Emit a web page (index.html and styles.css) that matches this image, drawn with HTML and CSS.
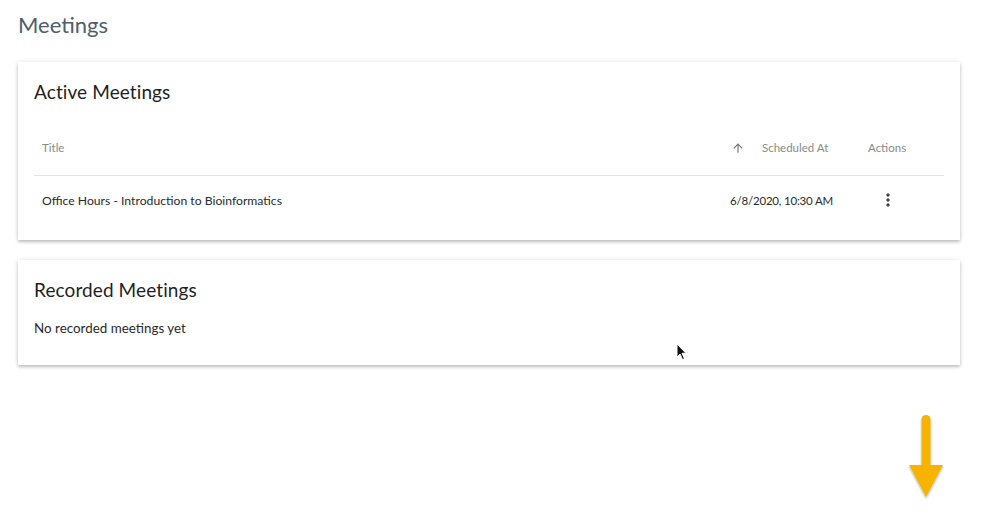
FILE: index.html
```html
<!DOCTYPE html>
<html lang="en">
<head>
<meta charset="utf-8">
<title>Meetings</title>
<link rel="stylesheet" href="styles.css">
</head>
<body>
<main class="page">
  <h1 class="page-title">Meetings</h1>

  <section class="card card-active">
    <h2 class="card-title">Active Meetings</h2>
    <div class="table">
      <div class="row head">
        <div class="cell">Title</div>
        <div class="cell sched">
          <svg class="sort" viewBox="0 0 24 24" width="14" height="14"><path d="M4 12l1.41 1.41L11 7.83V20h2V7.83l5.58 5.59L20 12l-8-8-8 8z" fill="#777"/></svg>
          <span>Scheduled At</span>
        </div>
        <div class="cell">Actions</div>
      </div>
      <div class="row body">
        <div class="cell">Office Hours - Introduction to Bioinformatics</div>
        <div class="cell date">6/8/2020, 10:30 AM</div>
        <div class="cell">
          <button class="kebab" aria-label="More actions">
            <svg viewBox="0 0 24 24" width="20" height="20"><path d="M12 8c1.1 0 2-.9 2-2s-.9-2-2-2-2 .9-2 2 .9 2 2 2zm0 2c-1.1 0-2 .9-2 2s.9 2 2 2 2-.9 2-2-.9-2-2-2zm0 6c-1.1 0-2 .9-2 2s.9 2 2 2 2-.9 2-2-.9-2-2-2z" fill="#444"/></svg>
          </button>
        </div>
      </div>
    </div>
  </section>

  <section class="card card-recorded">
    <h2 class="card-title">Recorded Meetings</h2>
    <p class="empty">No recorded meetings yet</p>
  </section>
</main>

<svg class="cursor" viewBox="0 0 12 18" width="12" height="18">
  <path d="M1 1 L1 14 L4 11 L6.5 16.5 L8.5 15.6 L6 10.3 L10 10.3 Z" fill="#111" stroke="#fff" stroke-width="1"/>
</svg>

<svg class="big-arrow" viewBox="0 0 40 90" width="40" height="90">
  <defs>
    <filter id="sh" x="-20%" y="-10%" width="140%" height="130%">
      <feDropShadow dx="0" dy="1.5" stdDeviation="1" flood-color="#000" flood-opacity="0.35"/>
    </filter>
  </defs>
  <g filter="url(#sh)">
    <rect x="15.5" y="2" width="9" height="60" rx="4.5" fill="#f6b400"/>
    <path d="M3 52 L37 52 L20 84 Z" fill="#f6b400"/>
  </g>
</svg>
</body>
</html>
```

FILE: styles.css
```css
* { box-sizing: border-box; }

html, body {
  margin: 0;
  padding: 0;
  background: #ffffff;
}

body {
  font-family: Lato, "Noto Sans", "Liberation Sans", sans-serif;
  color: #222;
  width: 984px;
  height: 512px;
  overflow: hidden;
  position: relative;
}

.page {
  padding: 10px 24px 0 18px;
}

.page-title {
  margin: 0 0 22px;
  font-size: 22px;
  line-height: 30px;
  font-weight: 400;
  color: #4f5d6c;
}

.card {
  background: #fff;
  box-shadow: 0 2px 3px rgba(0,0,0,0.22), 0 0 6px rgba(0,0,0,0.09);
  padding: 16px 16px;
}

.card-recorded {
  margin-top: 20px;
  padding-bottom: 27px;
}

.card-title {
  margin: 0;
  font-size: 19px;
  line-height: 28px;
  font-weight: 400;
  color: #1f1f1f;
  letter-spacing: 0.1px;
}

.table {
  margin-top: 14px;
}

.row {
  display: grid;
  grid-template-columns: 1fr 138px 84px;
  align-items: center;
}

.row.head {
  height: 56px;
  border-bottom: 1px solid #e3e3e3;
  font-size: 11.5px;
  color: #8a8a8a;
}

.row.body {
  height: 48px;
  font-size: 12.2px;
  color: #2a2a2a;
}

.cell {
  padding-left: 8px;
}

.date {
  font-size: 11.5px;
  letter-spacing: -0.2px;
}

.sched {
  display: flex;
  align-items: center;
  gap: 17px;
  padding-left: 9px;
}

.sort { flex: none; }

.kebab {
  border: 0;
  background: none;
  padding: 0;
  margin-left: 10px;
  width: 20px;
  height: 20px;
  display: flex;
  align-items: center;
  justify-content: center;
  cursor: pointer;
}

.empty {
  margin: 14px 0 0;
  font-size: 13.4px;
  line-height: 20px;
  color: #2a2a2a;
}

.cursor {
  position: absolute;
  left: 676px;
  top: 343px;
}

.big-arrow {
  position: absolute;
  left: 906px;
  top: 413px;
}
```
